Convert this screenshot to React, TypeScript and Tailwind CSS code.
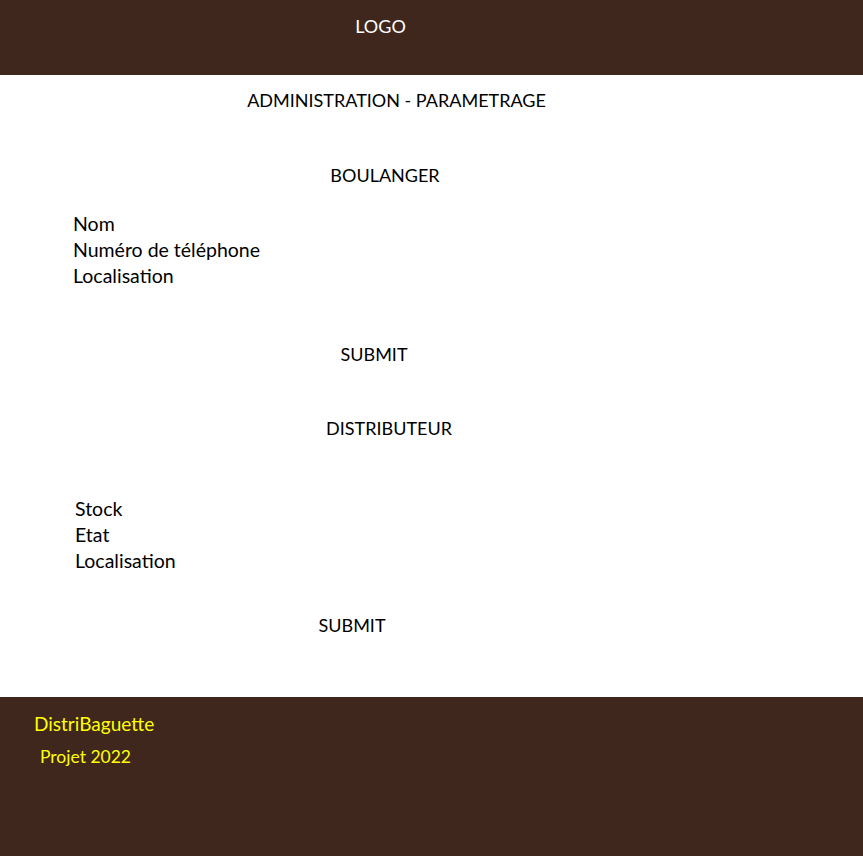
import React from "react";

const Section = ({
  title,
  titleShift,
  fields,
  fieldsPad,
  fieldsTop,
  submitShift,
  submitTop,
}: {
  title: string;
  titleShift: string;
  fields: string[];
  fieldsPad: string;
  fieldsTop: string;
  submitShift: string;
  submitTop: string;
}) => {
  return (
    <div className="flex flex-col">
      <p className={`text-center text-[18px] leading-[24px] ${titleShift}`}>{title}</p>
      <div className={`flex flex-col ${fieldsPad} ${fieldsTop}`}>
        {fields.map((f) => (
          <p key={f} className="text-[19.5px] leading-[26px]">
            {f}
          </p>
        ))}
      </div>
      <p className={`text-center text-[18px] leading-[24px] ${submitShift} ${submitTop}`}>SUBMIT</p>
    </div>
  );
};

export default function App() {
  return (
    <div className="flex min-h-[856px] w-[863px] flex-col bg-white text-black font-['Lato','Open_Sans',sans-serif]">
      {/* Header */}
      <header className="h-[75px] bg-[#3f271d] pt-[14px]">
        <p className="pr-[102px] text-center text-[18px] leading-[24px] text-white">LOGO</p>
      </header>

      <main className="flex flex-1 flex-col pt-[13px]">
        <p className="ml-[-70px] text-center text-[18px] leading-[24px]">
          ADMINISTRATION - PARAMETRAGE
        </p>

        <div className="mt-[51px]">
          <Section
            title="BOULANGER"
            titleShift="pr-[93px]"
            fields={["Nom", "Numéro de téléphone", "Localisation"]}
            fieldsPad="pl-[73px]"
            fieldsTop="mt-[24px]"
            submitShift="pr-[115px]"
            submitTop="mt-[53px]"
          />
        </div>

        <div className="mt-[50px]">
          <Section
            title="DISTRIBUTEUR"
            titleShift="pr-[85px]"
            fields={["Stock", "Etat", "Localisation"]}
            fieldsPad="pl-[75px]"
            fieldsTop="mt-[56px]"
            submitShift="pr-[159px]"
            submitTop="mt-[39px]"
          />
        </div>
      </main>

      {/* Footer */}
      <footer className="h-[159px] bg-[#3f271d] pt-[15px] text-[#ffff00]">
        <p className="pl-[34px] text-[19px] leading-[24px]">DistriBaguette</p>
        <p className="mt-[9px] pl-[40px] text-[17.5px] leading-[24px]">Projet 2022</p>
      </footer>
    </div>
  );
}
